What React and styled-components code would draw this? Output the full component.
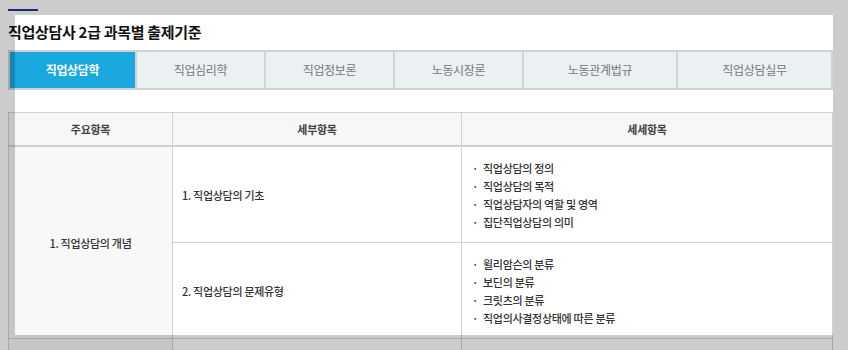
import React from 'react';
import styled, { createGlobalStyle } from 'styled-components';

const GlobalStyle = createGlobalStyle`
  body {
    margin: 0;
    background: #ffffff;
    font-family: 'Noto Sans CJK KR', 'Noto Sans', sans-serif;
    color: #333;
  }
`;

const tabs = [
  { name: '직업상담학', width: 129 },
  { name: '직업심리학', width: 129 },
  { name: '직업정보론', width: 129 },
  { name: '노동시장론', width: 129 },
  { name: '노동관계법규', width: 154 },
  { name: '직업상담실무', width: 155 },
];

const rows = [
  {
    main: '1. 직업상담의 개념',
    subs: [
      {
        name: '1. 직업상담의 기초',
        items: ['직업상담의 정의', '직업상담의 목적', '직업상담자의 역할 및 영역', '집단직업상담의 의미'],
      },
      {
        name: '2. 직업상담의 문제유형',
        items: ['윌리암슨의 분류', '보딘의 분류', '크릿츠의 분류', '직업의사결정상태에 따른 분류'],
      },
    ],
  },
  {
    main: '2. 직업상담의 기법',
    subs: [
      {
        name: '1. 초기면담의 의미',
        items: ['초기면담의 유형', '초기면담의 주요 요소', '내담자와의 관계형성', '구조화된 면담법'],
      },
    ],
  },
];

const App = () => {
  return (
    <>
      <GlobalStyle />
      <Page>
        <TopBar />
        <Title>직업상담사 2급 과목별 출제기준</Title>
        <Tabs>
          {tabs.map((tab, i) => (
            <Tab key={tab.name} $active={i === 0} $width={tab.width}>
              {tab.name}
            </Tab>
          ))}
        </Tabs>
        <Table>
          <colgroup>
            <col style={{ width: 164 }} />
            <col style={{ width: 289 }} />
            <col />
          </colgroup>
          <thead>
            <tr>
              <Th>주요항목</Th>
              <Th>세부항목</Th>
              <Th>세세항목</Th>
            </tr>
          </thead>
          <tbody>
            {rows.map((row) =>
              row.subs.map((sub, j) => (
                <tr key={sub.name + row.main}>
                  {j === 0 && <MainCell rowSpan={row.subs.length}>{row.main}</MainCell>}
                  <SubCell>{sub.name}</SubCell>
                  <ItemCell>
                    <ItemList>
                      {sub.items.map((item) => (
                        <li key={item}>{item}</li>
                      ))}
                    </ItemList>
                  </ItemCell>
                </tr>
              ))
            )}
          </tbody>
        </Table>
      </Page>
      <Spotlight />
    </>
  );
};

const Page = styled.div`
  width: 825px;
  padding: 9px 0 40px 8px;
`;

const TopBar = styled.div`
  width: 30px;
  height: 2px;
  background-color: #213595;
`;

const Title = styled.h2`
  margin: 11px 0 8px;
  font-size: 15px;
  line-height: 20px;
  font-weight: 700;
  color: #111;
  letter-spacing: -0.3px;
`;

const Tabs = styled.ul`
  display: flex;
  margin: 0 0 22px;
  padding: 0;
  list-style: none;
  border-top: 2px solid #d3d3d3;
  border-bottom: 2px solid #d3d3d3;
  border-left: 2px solid #d3d3d3;
  height: 36px;
`;

const Tab = styled.li`
  box-sizing: border-box;
  width: ${({ $width }) => $width}px;
  display: flex;
  align-items: center;
  justify-content: center;
  padding-bottom: 1px;
  border-right: 2px solid #d3d3d3;
  background-color: ${({ $active }) => ($active ? '#1ba7e0' : '#ebf0f3')};
  color: ${({ $active }) => ($active ? '#ffffff' : '#777')};
  font-size: 12px;
  font-weight: ${({ $active }) => ($active ? 700 : 400)};
  letter-spacing: -0.3px;
  &:first-child {
    width: ${({ $width }) => $width - 2}px;
  }
`;

const Table = styled.table`
  width: 825px;
  border-collapse: collapse;
  table-layout: fixed;
  border: 1px solid #d3d3d3;
  font-size: 11px;
  letter-spacing: -0.3px;
`;

const Th = styled.th`
  height: 32px;
  padding: 0;
  background-color: #f7f7f7;
  border-left: 1px solid #d3d3d3;
  border-bottom: 2px solid #cfcfcf;
  color: #444;
  font-weight: 700;
  text-align: center;
`;

const MainCell = styled.td`
  background-color: #f8f8f8;
  border: 1px solid #d3d3d3;
  text-align: center;
  color: #333;
  font-weight: 500;
`;

const SubCell = styled.td`
  border: 1px solid #d3d3d3;
  padding: 0 9px;
  color: #333;
  font-weight: 500;
`;

const ItemCell = styled.td`
  border: 1px solid #d3d3d3;
  padding: 12px 10px 11px;
`;

const ItemList = styled.ul`
  margin: 0;
  padding: 0;
  list-style: none;
  li {
    line-height: 18px;
    color: #333;
    font-weight: 500;
  }
  li::before {
    content: '·';
    margin-right: 5px;
  }
`;

const Spotlight = styled.div`
  position: fixed;
  top: 15px;
  left: 15px;
  width: 818px;
  height: 320px;
  pointer-events: none;
  box-shadow: 0 0 0 3000px rgba(0, 0, 0, 0.2);
`;

export default App;
